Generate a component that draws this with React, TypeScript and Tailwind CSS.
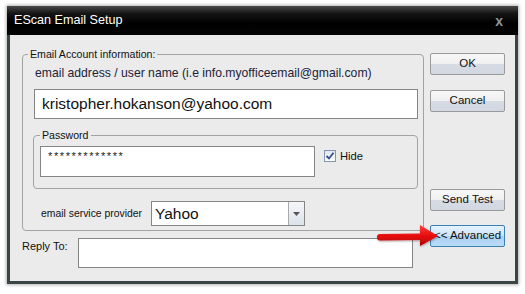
import React from "react";

const font = { fontFamily: '"Liberation Sans", Arial, sans-serif' };

function Btn({ label, active }: { label: string; active?: boolean }) {
  return (
    <div
      className={
        "h-[22px] w-[75px] rounded-[2px] border flex items-center justify-center text-[11.5px] text-[#111] " +
        (active
          ? "border-[#3c7fb1] bg-[linear-gradient(#e6f3fd_0%,#cbe5fa_50%,#a9d2f4_51%,#b9dbf6_100%)]"
          : "border-[#9a9a9a] bg-[linear-gradient(#f7f7f7_0%,#f0f0f0_50%,#d6dbe4_51%,#d2d8e2_100%)]")
      }
    >
      {label}
    </div>
  );
}

export default function App() {
  return (
    <div className="w-[525px] h-[294px] bg-white pt-[6px] pl-[7px] relative overflow-hidden" style={font}>
      <div className="w-[511px] h-[278px] flex flex-col shadow-[0_0_3px_1px_rgba(0,0,0,0.3)]">
        {/* Title bar */}
        <div className="h-[29px] flex items-center justify-between pl-[7px] pr-[15px] bg-[linear-gradient(#4a4a4a_0%,#151515_25%,#000_60%,#050505_100%)]">
          <span className="text-white text-[12.6px]">EScan Email Setup</span>
          <span className="text-[#8e979a] text-[14px] font-bold leading-none">x</span>
        </div>
        {/* Body */}
        <div className="flex-1 flex bg-[#ebebeb] border-l-[3px] border-r-[3px] border-b-[3px] border-[#3a4646]">
          {/* Left column */}
          <div className="flex flex-col pl-[12px]">
            <fieldset className="mt-[12px] w-[402px] border border-[#a3a3a3] rounded-[4px] flex flex-col pb-[4px]">
              <legend className="ml-[5px] px-[2px] text-[10.6px] leading-[14px] text-[#111]">
                Email Account information:
              </legend>
              <div className="mt-[5px] ml-[12px] text-[12.2px] leading-[14px] text-[#22223a] whitespace-nowrap">
                email address / user name (i.e info.myofficeemail@gmail.com)
              </div>
              <div className="mt-[9px] ml-[11px] w-[384px] h-[30px] bg-white border border-[#858585] flex items-center pl-[7px] text-[15.5px] text-[#111]">
                kristopher.hokanson@yahoo.com
              </div>
              <fieldset className="mt-[9px] ml-[10px] mr-[5px] border border-[#a3a3a3] rounded-[4px] flex pb-[11px]">
                <legend className="ml-[6px] px-[2px] text-[10.6px] leading-[14px] text-[#111]">Password</legend>
                <div className="mt-[4px] ml-[6px] w-[275px] h-[31px] bg-white border border-[#858585] pl-[7px] pt-[3px] text-[11px] leading-[12px] tracking-[1.6px] text-[#222]">
                  *************
                </div>
                <div className="mt-[8px] ml-[9px] flex items-start">
                  <div className="w-[12px] h-[12px] border border-[#8496b0] bg-[linear-gradient(#e2e6ec,#fdfdfd)] flex items-center justify-center">
                    <svg width="10" height="10" viewBox="0 0 10 10">
                      <path d="M1.5 5 L4 7.5 L8.5 1.8" fill="none" stroke="#33508a" strokeWidth="1.8" />
                    </svg>
                  </div>
                  <span className="ml-[4px] text-[11.2px] leading-[13px] text-[#111]">Hide</span>
                </div>
              </fieldset>
              <div className="mt-[12px] flex items-center">
                <span className="w-[128px] pl-[18px] text-[10.4px] text-[#111] whitespace-nowrap">email service provider</span>
                <div className="w-[154px] h-[25px] bg-white border border-[#858585] flex">
                  <div className="flex-1 flex items-center pl-[3px] text-[15.5px] text-[#111]">Yahoo</div>
                  <div className="w-[16px] border-l border-[#a9a9a9] bg-[linear-gradient(#f4f6f9,#dde3ec)] flex items-center justify-center">
                    <svg width="7" height="4" viewBox="0 0 7 4">
                      <path d="M0 0 H7 L3.5 4 Z" fill="#555" />
                    </svg>
                  </div>
                </div>
              </div>
            </fieldset>
            <div className="mt-[7px] flex items-start">
              <span className="w-[56px] text-[11px] leading-[14px] mt-[1px] text-[#111]">Reply To:</span>
              <div className="w-[335px] h-[30px] bg-white border border-[#858585]" />
            </div>
          </div>
          {/* Buttons */}
          <div className="ml-[6px] pt-[18px] flex flex-col">
            <Btn label="OK" />
            <div className="mt-[15px]">
              <Btn label="Cancel" />
            </div>
            <div className="mt-[77px]">
              <Btn label="Send Test" />
            </div>
            <div className="mt-[14px]">
              <Btn label="<< Advanced" active />
            </div>
          </div>
        </div>
      </div>
      {/* Red arrow annotation */}
      <svg className="absolute left-[374px] top-[221px]" width="70" height="30" viewBox="0 0 70 30">
        <defs>
          <linearGradient id="rg" x1="0" y1="0" x2="0" y2="1">
            <stop offset="0" stopColor="#ff4040" />
            <stop offset="0.5" stopColor="#e81010" />
            <stop offset="1" stopColor="#b00000" />
          </linearGradient>
          <filter id="sh" x="-20%" y="-30%" width="140%" height="160%">
            <feDropShadow dx="0.5" dy="1" stdDeviation="1" floodColor="#000" floodOpacity="0.35" />
          </filter>
        </defs>
        <path
          d="M6 13 L46 12.5 L46 4 L64 15 L46 25 L46 19 L6 19.5 Q3 19.5 3 16.2 Q3 13 6 13 Z"
          fill="url(#rg)"
          filter="url(#sh)"
        />
      </svg>
    </div>
  );
}
